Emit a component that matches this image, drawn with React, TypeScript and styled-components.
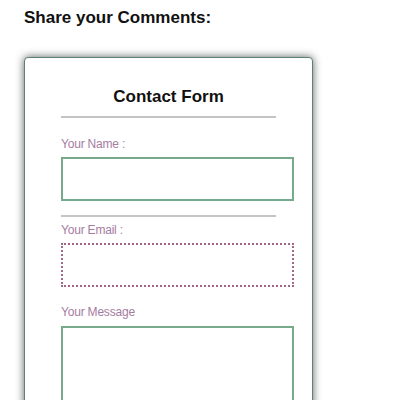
import { createGlobalStyle } from 'styled-components'
import styled from 'styled-components'

const GlobalStyle = createGlobalStyle`
  html, body {
    margin: 0;
    padding: 0;
    background: #ffffff;
    font-family: "Liberation Sans", Arial, sans-serif;
  }
`

function App() {
  return (
    <>
      <GlobalStyle />
      <Page>
        <PageTitle>Share your Comments:</PageTitle>
        <Card>
          <FormTitle>Contact Form</FormTitle>
          <Divider $top={9} />
          <Label $top={19} htmlFor="name">Your Name :</Label>
          <TextInput id="name" type="text" />
          <Divider $top={14} />
          <Label $top={6} htmlFor="email">Your Email :</Label>
          <TextInput id="email" type="email" $dotted />
          <Label $top={18} htmlFor="message">Your Message</Label>
          <MessageArea id="message" />
        </Card>
      </Page>
    </>
  )
}

const Page = styled.div`
  padding: 8px 0 0 24px;
  height: 400px;
  overflow: hidden;
  box-sizing: border-box;
`

const PageTitle = styled.h2`
  margin: 0;
  font-size: 17px;
  line-height: 20px;
  font-weight: 700;
  color: #111;
`

const Card = styled.div`
  margin-top: 29px;
  width: 289px;
  box-sizing: border-box;
  padding: 29px 36px 40px;
  background: #fff;
  border: 1px solid #5f8070;
  border-radius: 4px;
  box-shadow: 0 0 9px rgba(50, 60, 55, 0.8);
`

const FormTitle = styled.h3`
  margin: 0;
  text-align: center;
  font-size: 17px;
  line-height: 20px;
  font-weight: 700;
  color: #111;
`

const Divider = styled.hr<{ $top: number }>`
  margin: ${({ $top }) => $top}px 0 0;
  border: none;
  border-top: 2px solid #c4c4c4;
  height: 0;
`

const Label = styled.label<{ $top: number }>`
  display: block;
  margin-top: ${({ $top }) => $top}px;
  font-size: 12px;
  line-height: 14px;
  letter-spacing: -0.2px;
  color: #a57c9f;
`

const TextInput = styled.input<{ $dotted?: boolean }>`
  display: block;
  margin-top: 6px;
  width: 100%;
  height: 24px;
  padding: 8px 7px;
  box-sizing: content-box;
  border: 2px ${({ $dotted }) => ($dotted ? 'dotted #a3668c' : 'solid #77a98b')};
  background: #fff;
  outline: none;
`

const MessageArea = styled.textarea`
  display: block;
  margin-top: 7px;
  width: 100%;
  height: 120px;
  padding: 8px 7px;
  box-sizing: content-box;
  border: 2px solid #77a98b;
  resize: none;
  outline: none;
`

export default App
